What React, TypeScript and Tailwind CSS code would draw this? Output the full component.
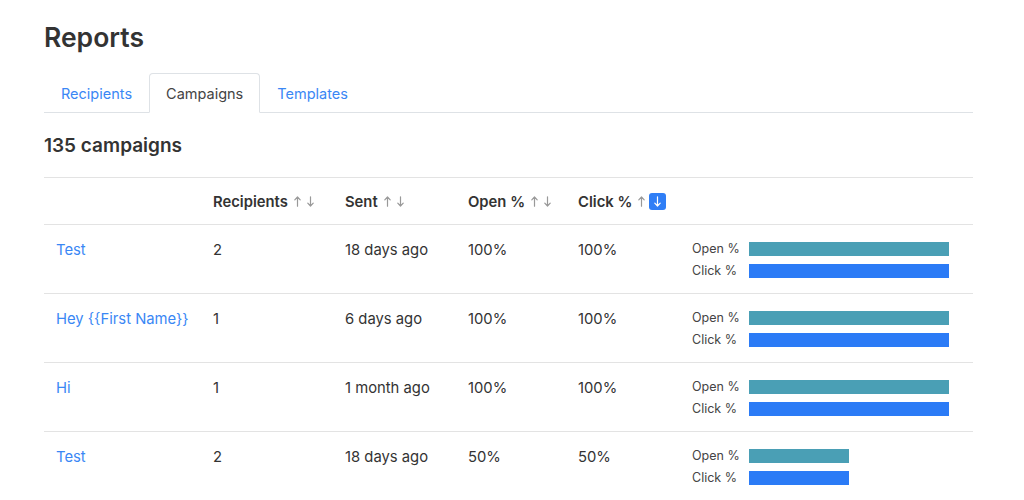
import React from "react";

type Campaign = {
  name: string;
  recipients: number;
  sent: string;
  open: number;
  click: number;
};

const campaigns: Campaign[] = [
  { name: "Test", recipients: 2, sent: "18 days ago", open: 100, click: 100 },
  { name: "Hey {{First Name}}", recipients: 1, sent: "6 days ago", open: 100, click: 100 },
  { name: "Hi", recipients: 1, sent: "1 month ago", open: 100, click: 100 },
  { name: "Test", recipients: 2, sent: "18 days ago", open: 50, click: 50 },
];

const tabs = ["Recipients", "Campaigns", "Templates"];

function Arrow({ down, color = "#999" }: { down?: boolean; color?: string }) {
  return (
    <svg width="7" height="11" viewBox="0 0 7 11" fill="none" stroke={color} strokeWidth="1.2" strokeLinecap="round" strokeLinejoin="round">
      {down ? (
        <path d="M3.5 0.8V10M0.8 7.2L3.5 10L6.2 7.2" />
      ) : (
        <path d="M3.5 10.2V1M0.8 3.8L3.5 1L6.2 3.8" />
      )}
    </svg>
  );
}

function SortArrows({ active }: { active?: boolean }) {
  return (
    <span className="ml-[6px] inline-flex items-center gap-[6px]">
      <Arrow />
      {active ? (
        <span className="-ml-[2px] flex h-[17px] w-[17px] items-center justify-center rounded-[3px] bg-[#2f7ef6]">
          <Arrow down color="#fff" />
        </span>
      ) : (
        <Arrow down />
      )}
    </span>
  );
}

function MiniChart({ open, click }: { open: number; click: number }) {
  return (
    <div className="flex h-[44px] flex-col text-[12.5px] text-[#444]">
      <div className="flex h-[22px] items-center">
        <span className="w-[57px] pt-[2px]">Open %</span>
        <div className="h-[14px] bg-[#4a9fb5]" style={{ width: open * 2 }} />
      </div>
      <div className="flex h-[22px] items-center">
        <span className="w-[57px] pt-[2px]">Click %</span>
        <div className="h-[14px] bg-[#2b7bf6]" style={{ width: click * 2 }} />
      </div>
    </div>
  );
}

const cols = "grid grid-cols-[157px_132px_123px_110px_114px_1fr]";

export default function App() {
  return (
    <div className="min-h-[500px] bg-white px-[44px] pt-[22px] font-['Inter',sans-serif] text-[#333]">
      <h1 className="text-[26.5px] font-semibold leading-[1.2] text-[#333]">Reports</h1>

      {/* Tabs */}
      <div className="mt-[19px] flex w-[929px] border-b border-[#dee2e6] text-[14.5px]">
        {tabs.map((t) => (
          <div
            key={t}
            className={
              t === "Campaigns"
                ? "-mb-px rounded-t-[4px] border border-[#dee2e6] border-b-white bg-white px-[16px] pt-[9px] pb-[7px] leading-[22px] text-[#444]"
                : "-mb-px border border-transparent px-[16px] pt-[9px] pb-[7px] leading-[22px] text-[#3a87f5]"
            }
          >
            {t}
          </div>
        ))}
      </div>

      <h2 className="mt-[22px] text-[19px] font-semibold leading-[1.2] text-[#333]">135 campaigns</h2>

      {/* Table */}
      <div className="mt-[19px] w-[929px] whitespace-nowrap text-[14.8px]">
        <div className={`${cols} h-[48px] items-center border-t border-b border-[#e3e3e3] pt-[2px] font-semibold`}>
          <div className="px-[12px]" />
          <div className="flex items-center px-[12px]">
            Recipients
            <SortArrows />
          </div>
          <div className="flex items-center px-[12px]">
            Sent
            <SortArrows />
          </div>
          <div className="flex items-center px-[12px]">
            Open %
            <SortArrows />
          </div>
          <div className="flex items-center px-[12px]">
            Click %
            <SortArrows active />
          </div>
          <div className="px-[12px]" />
        </div>

        {campaigns.map((c, i) => (
          <div key={i} className={`${cols} border-b border-[#e3e3e3]`}>
            <div className="px-[12px] pt-[14px] leading-[22px]">
              <a className="text-[#3a87f5]" href="#">
                {c.name}
              </a>
            </div>
            <div className="px-[12px] pt-[14px] leading-[22px]">{c.recipients}</div>
            <div className="px-[12px] pt-[14px] leading-[22px]">{c.sent}</div>
            <div className="px-[12px] pt-[14px] leading-[22px]">{c.open}%</div>
            <div className="px-[12px] pt-[14px] leading-[22px]">{c.click}%</div>
            <div className="px-[12px] pt-[13px] pb-[11px]">
              <MiniChart open={c.open} click={c.click} />
            </div>
          </div>
        ))}
      </div>
    </div>
  );
}
